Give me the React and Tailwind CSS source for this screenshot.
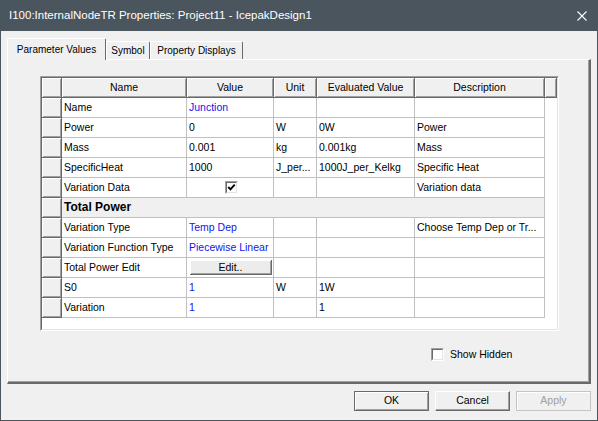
import React from 'react';

const rows = [
  { name: 'Name', value: 'Junction', blue: true },
  { name: 'Power', value: '0', unit: 'W', evald: '0W', desc: 'Power' },
  { name: 'Mass', value: '0.001', unit: 'kg', evald: '0.001kg', desc: 'Mass' },
  { name: 'SpecificHeat', value: '1000', unit: 'J_per...', evald: '1000J_per_Kelkg', desc: 'Specific Heat' },
  { name: 'Variation Data', check: true, desc: 'Variation data' },
  { section: 'Total Power' },
  { name: 'Variation Type', value: 'Temp Dep', blue: true, desc: 'Choose Temp Dep or Tr...' },
  { name: 'Variation Function Type', value: 'Piecewise Linear', blue: true },
  { name: 'Total Power Edit', button: 'Edit..' },
  { name: 'S0', value: '1', blue: true, unit: 'W', evald: '1W' },
  { name: 'Variation', value: '1', blue: true, evald: '1' },
];

const raised =
  'bg-[#f0f0f0] border-r border-b border-[#696969] shadow-[inset_1px_1px_0_#fff,inset_-1px_-1px_0_#a0a0a0]';
const cell = 'h-[20px] border-r border-b border-[#c0c0c0] pl-[2px] leading-[19px] whitespace-nowrap overflow-hidden';

const Sunken = ({ className = '', children }) => (
  <div className={`border border-t-[#a0a0a0] border-l-[#a0a0a0] border-b-white border-r-white ${className}`}>
    <div className="w-full h-full border border-t-[#696969] border-l-[#696969] border-b-[#e3e3e3] border-r-[#e3e3e3] bg-white flex items-center justify-center">
      {children}
    </div>
  </div>
);

const HeaderRow = () => (
  <div className="flex h-[20px]">
    <div className={`w-[20px] ${raised}`} />
    {[
      ['Name', 'w-[125px]'],
      ['Value', 'w-[87px]'],
      ['Unit', 'w-[43px]'],
      ['Evaluated Value', 'w-[98px]'],
      ['Description', 'w-[130px]'],
    ].map(([label, w]) => (
      <div key={label} className={`${w} ${raised} text-center leading-[19px]`}>
        {label}
      </div>
    ))}
    <div className={`w-[12px] ${raised}`} />
  </div>
);

const DataRow = ({ row }) => {
  if (row.section) {
    return (
      <div className="flex h-[20px]">
        <div className={`w-[20px] ${raised}`} />
        <div className={`w-[483px] ${cell} bg-[#f0f0f0] font-bold text-[12px]`}>{row.section}</div>
      </div>
    );
  }
  return (
    <div className="flex h-[20px]">
      <div className={`w-[20px] ${raised}`} />
      <div className={`w-[125px] ${cell}`}>{row.name}</div>
      <div className={`w-[87px] ${cell} ${row.blue ? 'text-[#1414f0]' : ''} ${row.check || row.button ? 'flex items-center justify-center pl-0' : ''}`}>
        {row.check && (
          <Sunken className="w-[13px] h-[13px]">
            <svg width="9" height="9" viewBox="0 0 9 9">
              <polyline points="1.3,4 3.5,6.4 7.7,1.6" fill="none" stroke="#000" strokeWidth="1.9" />
            </svg>
          </Sunken>
        )}
        {row.button && (
          <div className="w-[82px] h-[15px] bg-[#ececec] border-r border-b border-[#696969] shadow-[inset_1px_1px_0_#fff,inset_-1px_-1px_0_#a0a0a0] text-center leading-[14px]">
            {row.button}
          </div>
        )}
        {!row.check && !row.button && row.value}
      </div>
      <div className={`w-[43px] ${cell}`}>{row.unit}</div>
      <div className={`w-[98px] ${cell}`}>{row.evald}</div>
      <div className={`w-[130px] ${cell}`}>{row.desc}</div>
    </div>
  );
};

const Tab = ({ label, active, w }) => (
  <div
    className={`${w} flex items-center justify-center border-t border-l border-white border-r border-r-[#696969] rounded-t-[2px] bg-[#f0f0f0] text-[10px] ${
      active ? 'h-[22px] -mb-px relative z-10' : 'h-[18px]'
    }`}
  >
    {label}
  </div>
);

const Button = ({ label, kind }) => {
  const styles = {
    default: 'border border-[#696969] shadow-[inset_1px_1px_0_#fff,inset_-1px_-1px_0_#a0a0a0] text-black',
    normal: 'border-t border-l border-white border-r border-b border-r-[#696969] border-b-[#696969] shadow-[inset_-1px_-1px_0_#a0a0a0] text-black',
    disabled: 'border border-[#c4c4c4] shadow-[inset_1px_1px_0_#fff] text-[#a0a0a0]',
  };
  return (
    <div className={`w-[75px] h-[20px] bg-[#f0f0f0] flex items-center justify-center text-[10.5px] ${styles[kind]}`}>
      {label}
    </div>
  );
};

export default function App() {
  return (
    <div className="w-[598px] h-[421px] flex flex-col bg-[#f0f0f0] border border-[#4b555d] font-['Liberation_Sans',Arial,sans-serif] text-black text-[10.5px]">
      {/* title bar */}
      <div className="h-[30px] shrink-0 bg-[#4b555d] flex items-center justify-between pl-[8px] pr-[10px] text-white text-[11.5px]">
        <span>I100:InternalNodeTR Properties: Project11 - IcepakDesign1</span>
        <svg width="10" height="10" viewBox="0 0 10 10">
          <path d="M0.5 0.5 L9.5 9.5 M9.5 0.5 L0.5 9.5" stroke="#fff" strokeWidth="1.1" />
        </svg>
      </div>

      <div className="flex-1 flex flex-col px-[6px] pt-[6px]">
        {/* tab strip */}
        <div className="h-[22px] flex items-end">
          <Tab label="Parameter Values" active w="w-[99px]" />
          <Tab label="Symbol" w="w-[44px]" />
          <Tab label="Property Displays" w="w-[93px]" />
        </div>

        {/* tab page */}
        <div className="h-[325px] border-t border-l border-white border-r-2 border-b-2 border-r-[#696969] border-b-[#696969] shadow-[inset_-1px_-1px_0_#a0a0a0] pl-[32px] pt-[16px]">
          <div className="w-[519px] h-[255px] border border-t-[#a0a0a0] border-l-[#a0a0a0] border-b-white border-r-white">
            <div className="w-full h-full border border-t-[#696969] border-l-[#696969] border-b-[#e3e3e3] border-r-[#e3e3e3] bg-white overflow-hidden">
              <HeaderRow />
              {rows.map((row, i) => (
                <DataRow key={i} row={row} />
              ))}
            </div>
          </div>

          <div className="ml-[391px] mt-[16px] flex items-center gap-[6px]">
            <Sunken className="w-[13px] h-[13px]" />
            <span>Show Hidden</span>
          </div>
        </div>

        {/* dialog buttons */}
        <div className="flex justify-end gap-[6px] mt-[7px]">
          <Button label="OK" kind="default" />
          <Button label="Cancel" kind="normal" />
          <Button label="Apply" kind="disabled" />
        </div>
      </div>
    </div>
  );
}
